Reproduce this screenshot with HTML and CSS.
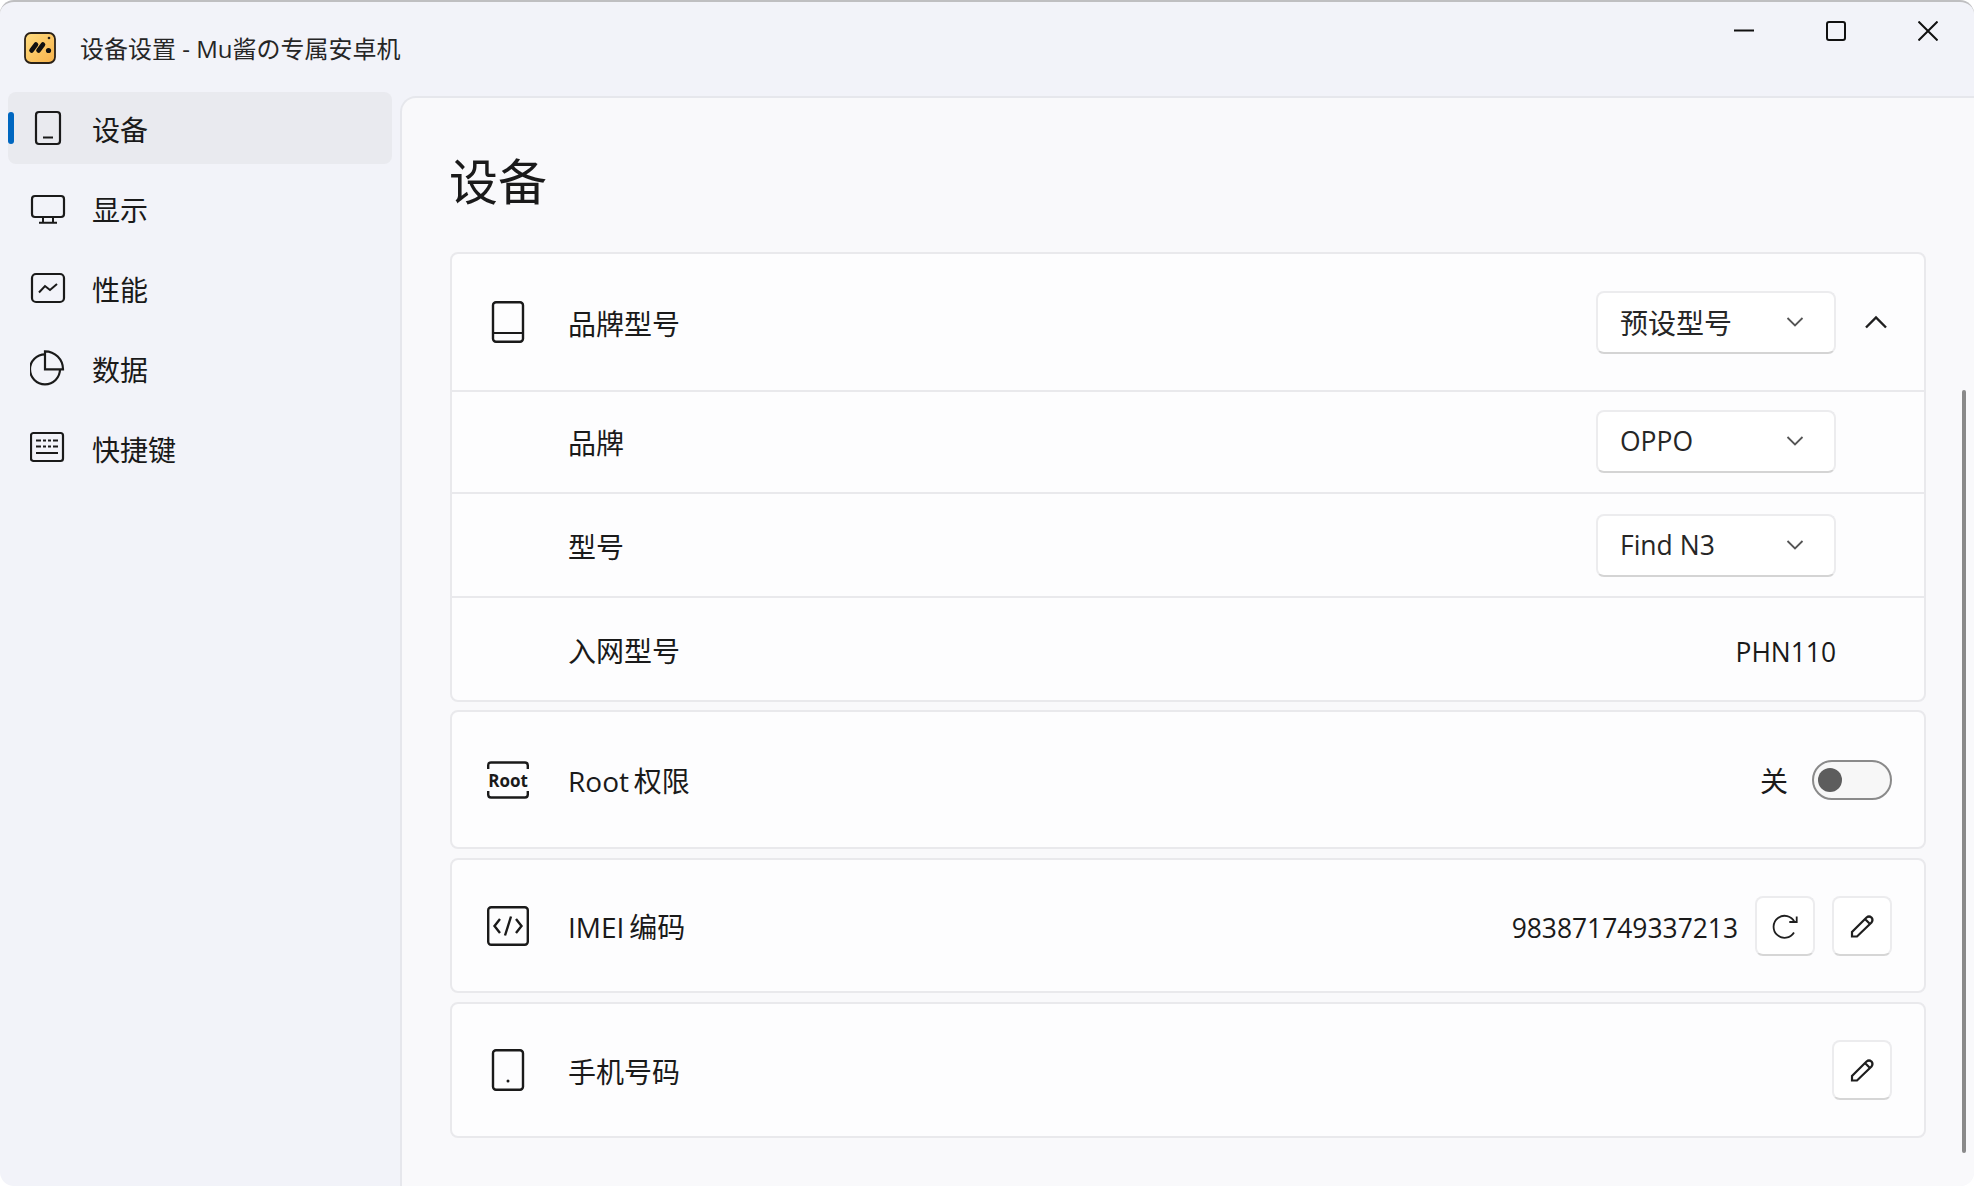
FILE: index.html
```html
<!DOCTYPE html>
<html lang="zh-CN">
<head>
<meta charset="utf-8">
<title>设备设置</title>
<link rel="stylesheet" href="styles.css">
</head>
<body>
<div class="window">
  <header class="titlebar">
    <svg class="logo" viewBox="0 0 32 32" width="32" height="32">
      <defs><linearGradient id="lg" x1="0" y1="0" x2="1" y2="1"><stop offset="0" stop-color="#ffdc80"/><stop offset="1" stop-color="#f8b24a"/></linearGradient></defs>
      <rect x="1" y="1" width="30" height="30" rx="6" fill="url(#lg)" stroke="#2a2118" stroke-width="1.800"/>
      <circle cx="25" cy="6" r="1.300" fill="#2a2118"/>
      <path d="M7.500 18.500L12 12.500M14.500 18.500L19 12.500" stroke="#111" stroke-width="4.600" stroke-linecap="round" fill="none"/>
      <circle cx="24.500" cy="18.500" r="2.600" fill="#111"/>
    </svg>
    <span class="title">设备设置 - Mu酱の专属安卓机</span>
    <div class="winbtns">
      <svg width="20" height="20" viewBox="0 0 20 20"><path d="M0 9.500H20" stroke="#111" stroke-width="2"/></svg>
      <svg width="20" height="20" viewBox="0 0 20 20"><rect x="1" y="1" width="18" height="18" rx="2" fill="none" stroke="#111" stroke-width="2"/></svg>
      <svg width="20" height="20" viewBox="0 0 20 20"><path d="M.5 .5L19.500 19.500M19.500 .5L.5 19.500" stroke="#111" stroke-width="2" fill="none"/></svg>
    </div>
  </header>
  <div class="body">
    <nav class="sidebar">
      <a class="navitem selected">
        <span class="navicon"><svg width="36" height="36" viewBox="0 0 36 36"><rect x="6" y="2" width="24" height="32" rx="3" fill="none" stroke="#1a1a1a" stroke-width="2.200"/><path d="M13 27.500H23" stroke="#1a1a1a" stroke-width="2"/></svg></span>
        <span class="navlabel">设备</span>
      </a>
      <a class="navitem">
        <span class="navicon"><svg width="36" height="36" viewBox="0 0 36 36"><rect x="2" y="6" width="32" height="21" rx="3" fill="none" stroke="#1a1a1a" stroke-width="2.200"/><path d="M13 27V33M23 27V33M9 32.800H27" stroke="#1a1a1a" stroke-width="2" fill="none"/></svg></span>
        <span class="navlabel">显示</span>
      </a>
      <a class="navitem">
        <span class="navicon"><svg width="36" height="36" viewBox="0 0 36 36"><rect x="2" y="4" width="32" height="28" rx="4" fill="none" stroke="#1a1a1a" stroke-width="2.200"/><path d="M9 22.500L15 16L20 20L27 14" stroke="#1a1a1a" stroke-width="2" fill="none"/></svg></span>
        <span class="navlabel">性能</span>
      </a>
      <a class="navitem">
        <span class="navicon"><svg width="36" height="36" viewBox="0 0 36 36"><path d="M15 4.300A15 15 0 1 0 30 19.300" fill="none" stroke="#1a1a1a" stroke-width="2.200"/><path d="M15 19.300V1.300A18 18 0 0 1 33 19.300Z" fill="none" stroke="#1a1a1a" stroke-width="2.200"/></svg></span>
        <span class="navlabel">数据</span>
      </a>
      <a class="navitem">
        <span class="navicon"><svg width="36" height="36" viewBox="0 0 36 36"><rect x="1" y="3" width="32" height="28" rx="2.500" fill="none" stroke="#1a1a1a" stroke-width="2.200"/><path d="M6 10.500H11M13 10.500H16M18 10.500H21M23 10.500H28M6 16.500H11M13 16.500H16M18 16.500H21M23 16.500H28M6 23H28" stroke="#1a1a1a" stroke-width="2" fill="none"/></svg></span>
        <span class="navlabel">快捷键</span>
      </a>
    </nav>
    <main class="content">
      <h1 class="heading">设备</h1>
      <section class="card card-first">
        <div class="row row-head">
          <span class="rowicon"><svg width="42" height="42" viewBox="0 0 42 42"><rect x="6" y="1.200" width="30" height="39.600" rx="3" fill="none" stroke="#1a1a1a" stroke-width="2.400"/><path d="M6 32H36" stroke="#1a1a1a" stroke-width="2"/></svg></span>
          <span class="label">品牌型号</span>
          <div class="select"><span class="cjk">预设型号</span><svg class="chev" width="18" height="10" viewBox="0 0 18 10"><path d="M1.500 1L9 8.500L16.500 1" fill="none" stroke="#555" stroke-width="1.800"/></svg></div>
          <svg class="collapse" width="24" height="14" viewBox="0 0 24 14"><path d="M2 12.500L12 2.500L22 12.500" fill="none" stroke="#1f1f1f" stroke-width="2.400"/></svg>
        </div>
        <div class="row row-sub row-a">
          <span class="label sub">品牌</span>
          <div class="select"><span>OPPO</span><svg class="chev" width="18" height="10" viewBox="0 0 18 10"><path d="M1.500 1L9 8.500L16.500 1" fill="none" stroke="#555" stroke-width="1.800"/></svg></div>
        </div>
        <div class="row row-sub row-b">
          <span class="label sub">型号</span>
          <div class="select"><span>Find N3</span><svg class="chev" width="18" height="10" viewBox="0 0 18 10"><path d="M1.500 1L9 8.500L16.500 1" fill="none" stroke="#555" stroke-width="1.800"/></svg></div>
        </div>
        <div class="row row-sub row-c">
          <span class="label sub">入网型号</span>
          <span class="value netcode">PHN110</span>
        </div>
      </section>
      <section class="card">
        <div class="row single root">
          <span class="rowicon"><svg width="42" height="38" viewBox="0 0 42 38"><path d="M1.200 8V4.500Q1.200 1.500 4 1.500H38Q40.800 1.500 40.800 4.500V8M1.200 30V33.500Q1.200 36.500 4 36.500H38Q40.800 36.500 40.800 33.500V30" fill="none" stroke="#1a1a1a" stroke-width="2.400"/><text x="21" y="26" class="rootmark" text-anchor="middle">Root</text></svg></span>
          <span class="label">Root 权限</span>
          <span class="value off">关</span>
          <div class="switch"><i class="knob"></i></div>
        </div>
      </section>
      <section class="card">
        <div class="row single imei">
          <span class="rowicon"><svg width="42" height="40" viewBox="0 0 42 40"><rect x="1.200" y="1.200" width="39.600" height="37.600" rx="3" fill="none" stroke="#1a1a1a" stroke-width="2.400"/><path d="M13 13L7.500 20L13 27M29 13L34.500 20L29 27M24 10.500L18 29.500" fill="none" stroke="#1a1a1a" stroke-width="2.400"/></svg></span>
          <span class="label">IMEI 编码</span>
          <span class="value code">983871749337213</span>
          <button class="iconbtn gapl"><svg width="26" height="26" viewBox="0 0 26 26"><path d="M22.500 9A11 11 0 1 0 22 19.500" fill="none" stroke="#1f1f1f" stroke-width="1.800"/><path d="M24.700 3.500V9H17.300" fill="none" stroke="#1f1f1f" stroke-width="1.800"/></svg></button>
          <button class="iconbtn"><svg width="26" height="26" viewBox="0 0 26 26"><path d="M3 23.500V19L17.500 4.500Q20 2.500 22.500 4.500Q24.500 7 22.500 9.500L8 23.500ZM16 6L21 11" fill="none" stroke="#1f1f1f" stroke-width="2.200"/></svg></button>
        </div>
      </section>
      <section class="card">
        <div class="row single phone">
          <span class="rowicon"><svg width="42" height="42" viewBox="0 0 42 42"><rect x="6" y="1.200" width="30" height="39.600" rx="3" fill="none" stroke="#1a1a1a" stroke-width="2.400"/><circle cx="21" cy="32" r="1.500" fill="#1a1a1a"/></svg></span>
          <span class="label">手机号码</span>
          <button class="iconbtn pushed"><svg width="26" height="26" viewBox="0 0 26 26"><path d="M3 23.500V19L17.500 4.500Q20 2.500 22.500 4.500Q24.500 7 22.500 9.500L8 23.500ZM16 6L21 11" fill="none" stroke="#1f1f1f" stroke-width="2.200"/></svg></button>
        </div>
      </section>
      <div class="scrollbar"></div>
    </main>
  </div>
</div>
</body>
</html>
```
FILE: styles.css
```css
* { box-sizing: border-box; }
html, body { margin: 0; padding: 0; height: 100%; background: #fff; overflow: hidden; }
body { font-family: "Open Sans", "Noto Sans CJK SC", sans-serif; color: #1a1a1a; }
.window {
  width: 1974px; height: 1186px; display: flex; flex-direction: column;
  background: #f2f3f9; border-top: 2px solid #bfbfc1; border-radius: 14px; overflow: hidden;
}
.titlebar { height: 94px; flex: none; display: flex; align-items: flex-start; padding: 30px 36px 0 24px; }
.logo { flex: none; }
.title { font-size: 24px; line-height: 32px; margin: 1px 0 0 24px; color: #262626; }
.winbtns { margin-left: auto; display: flex; gap: 72px; margin-top: -11px; }
.body { flex: 1; display: flex; min-height: 0; }
.sidebar { width: 400px; flex: none; padding: 0 8px; display: flex; flex-direction: column; gap: 8px; margin-top: -4px; }
.navitem { height: 72px; display: flex; align-items: center; border-radius: 8px; position: relative; }
.navitem.selected { background: #e9eaef; }
.navitem.selected::before { content: ""; position: absolute; left: 0; top: 20px; width: 6px; height: 32px; border-radius: 3px; background: #0067c0; }
.navicon { width: 84px; padding-left: 22px; display: flex; flex: none; }
.navlabel { font-size: 28px; line-height: 40px; padding-top: 3px; }
.content {
  flex: 1; position: relative; background: #f9f9fb; border-left: 2px solid #e6e7ec; border-top: 2px solid #e6e7ec;
  border-top-left-radius: 16px; padding: 0 48px 0 48px; display: flex; flex-direction: column;
}
.heading { font-size: 49px; font-weight: 400; line-height: 64px; margin: 51px 0 39px -1px; height: 64px; }
.card { background: #fdfdfe; border: 2px solid #e9e9ec; border-radius: 8px; margin-bottom: 9px; flex: none; }
.card-first { margin-bottom: 8px; }
.row { display: flex; align-items: center; }
.row-head { height: 136px; padding-right: 36px; }
.row-sub { border-top: 2px solid #e9e9ec; padding-right: 88px; }
.row-a { height: 102px; padding-bottom: 2px; }
.row-b { height: 104px; }
.row-c { height: 104px; }
.single { padding-right: 32px; }
.root { height: 135px; }
.imei { height: 131px; }
.phone { height: 132px; }
.rowicon { width: 116px; flex: none; padding-left: 35px; display: flex; }
.label { font-size: 28px; line-height: 40px; padding-top: 3px; word-spacing: -2.500px; }
.label.sub { margin-left: 116px; }
.select {
  margin-left: auto; width: 240px; height: 63px; display: flex; align-items: center; justify-content: space-between;
  padding: 0 30px 0 22px; background: #fff; border: 2px solid #ececee; border-bottom-color: #d4d4d4; border-radius: 8px;
  font-size: 26.500px; color: #262626;
}
.cjk { font-size: 28px; }
.collapse { margin-left: 28px; flex: none; }
.value { font-size: 26.400px; line-height: 40px; }
.netcode { margin-left: auto; padding-top: 5px; }
.off { margin-left: auto; font-size: 28px; padding-top: 3px; }
.switch { width: 80px; height: 40px; margin-left: 24px; background: #f7f7f7; border: 2px solid #8a8a8a; border-radius: 20px; display: flex; align-items: center; padding-left: 4px; }
.knob { width: 24px; height: 24px; border-radius: 50%; background: #5d5d5d; display: block; }
.code { margin-left: auto; padding-top: 4px; }
.iconbtn {
  width: 60px; height: 60px; flex: none; margin: 0 0 0 17px; padding: 0; display: flex; align-items: center; justify-content: center;
  background: #fff; border: 2px solid #ececee; border-bottom-color: #d6d6d6; border-radius: 8px;
}
.gapl { margin-left: 17px; }
.pushed { margin-left: auto; }
.rootmark { font: 700 17px "Open Sans", sans-serif; fill: #1a1a1a; }
.scrollbar { position: absolute; right: 8px; top: 292px; width: 4px; height: 763px; background: #8a8a8a; border-radius: 2px; }
```
